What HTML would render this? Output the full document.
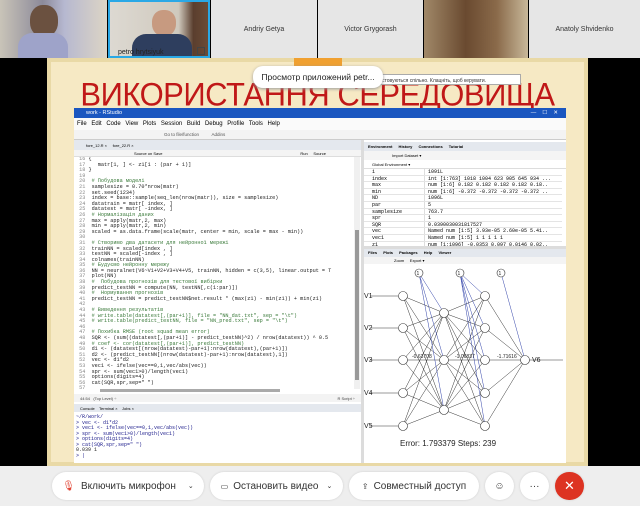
<!DOCTYPE html>
<html><head><meta charset="utf-8"><style>
*{margin:0;padding:0;box-sizing:border-box}
body{width:640px;height:506px;overflow:hidden;background:#000;font-family:"Liberation Sans",sans-serif;position:relative}
.a{position:absolute}
.th{position:absolute;top:0;height:58px;background:#e6e6e6;font-size:7px;color:#333;display:flex;align-items:center;justify-content:center}
.code{font-family:"Liberation Mono",monospace;font-size:5.2px;line-height:5.6px;white-space:pre;color:#222}
.cm{color:#3a7a3a}
.btn{position:absolute;top:472px;height:28px;background:#fff;border-radius:14px;font-size:10px;color:#333;display:flex;align-items:center;justify-content:center;box-shadow:0 0 2px #ccc}
.row{display:flex;height:6.6px;border-bottom:1px solid #e4e4e4;font-family:"Liberation Mono",monospace;font-size:5px;line-height:6px}
.row span:first-child{width:61px;padding-left:8px;border-right:1px solid #ddd}
.row span:last-child{padding-left:3px;white-space:nowrap;overflow:hidden}
</style></head><body>
<!-- thumbnails -->
<div class="th" style="left:0;width:107px;background:linear-gradient(90deg,#c9c4b8,#8c8a9a 40%,#b6b8d0 60%,#ddd5c5)"></div>
<div class="a" style="left:30px;top:5px;width:28px;height:32px;border-radius:45%;background:#6b5140"></div>
<div class="a" style="left:18px;top:33px;width:50px;height:25px;border-radius:14px 14px 0 0;background:#9ea3c9"></div>
<div class="th" style="left:108px;width:102px;border:2px solid #2aa8e6;background:linear-gradient(90deg,#ddd9d2,#cfc9bd 70%,#5a3e2e 85%,#6b4b36)"></div>
<div class="a" style="left:152px;top:10px;width:24px;height:26px;border-radius:45%;background:#c79a80"></div>
<div class="a" style="left:132px;top:34px;width:60px;height:22px;border-radius:14px 14px 0 0;background:#2e3e5e"></div>
<div class="a" style="left:118px;top:49px;font-size:7px;color:#222">petro hrytsiyuk</div>
<div class="a" style="left:197px;top:47px;width:8px;height:8px;border:1px solid #444"></div>
<div class="th" style="left:211px;width:106px">Andriy Getya</div>
<div class="th" style="left:318px;width:105px">Victor Grygorash</div>
<div class="th" style="left:424px;width:104px;background:linear-gradient(90deg,#a08868,#6a4a30 40%,#8a6a4a 70%,#c8b89a)"></div>
<div class="th" style="left:529px;width:111px">Anatoly Shvidenko</div>
<!-- slide -->
<div class="a" style="left:47px;top:58px;width:541px;height:408px;background:#f6e9c4;border:4px solid #e9d9a6"></div>
<div class="a" style="left:47px;top:78px;width:541px;text-align:center;font-size:31px;color:#c01818;letter-spacing:-0.5px;transform:scaleY(1.05)">ВИКОРИСТАННЯ СЕРЕДОВИЩА RSTUDIO</div>
<div class="a" style="left:294px;top:58px;width:48px;height:11px;background:#f0a030"></div>
<div class="a" style="left:285px;top:74px;width:236px;height:11px;background:#fff;font-size:5px;color:#333;padding:3px 0 0 80px;border:1px solid #aaa">використовуються спільно. Клацніть, щоб керувати.</div>
<div class="a" style="left:253px;top:66px;width:130px;height:22px;background:#fff;border-radius:10px;font-size:8.5px;color:#222;display:flex;align-items:center;justify-content:center;box-shadow:0 1px 3px #999">Просмотр приложений petr...</div>
<!-- rstudio -->
<div class="a" style="left:74px;top:108px;width:492px;height:355px;background:#fff"></div>
<div class="a" style="left:74px;top:108px;width:492px;height:10px;background:#1a56c0;color:#fff;font-size:5.5px;padding:2px 0 0 12px">work - RStudio<span style="position:absolute;right:8px">—&nbsp;&nbsp;&nbsp;&nbsp;☐&nbsp;&nbsp;&nbsp;&nbsp;✕</span></div>
<div class="a" style="left:74px;top:118px;width:492px;height:12px;background:#fafafa;font-size:6px;padding:3px 0 0 3px;word-spacing:3px">File Edit Code View Plots Session Build Debug Profile Tools Help</div>
<div class="a" style="left:74px;top:130px;width:492px;height:10px;background:#f3f3f3;border-bottom:1px solid #ccc;font-size:4.5px;color:#555;padding:2px 0 0 90px">Go to file/function &nbsp;&nbsp;&nbsp;&nbsp;&nbsp;&nbsp;&nbsp;&nbsp;&nbsp;Addins</div>
<div class="a" style="left:74px;top:140px;width:287px;height:10px;background:#e4e8ee;font-size:4px;padding:3px 0 0 12px">fore_12.R × &nbsp;&nbsp;&nbsp; fore_22.R ×</div>
<div class="a" style="left:74px;top:150px;width:287px;height:7px;background:#f4f4f4;border-bottom:1px solid #ddd;font-size:4px;padding:1px 0 0 60px">Source on Save<span style="position:absolute;right:35px">Run &nbsp;&nbsp;&nbsp; Source</span></div>
<div class="a code" style="left:76px;top:157px;width:275px;height:232px;overflow:hidden;color:#222"><span style="color:#888"> 16</span> {
<span style="color:#888"> 17</span>    matr[1, ] &lt;- z1[1 : (par + 1)]
<span style="color:#888"> 18</span> }
<span style="color:#888"> 19</span>
<span style="color:#888"> 20</span>  <span class="cm"># Побудова моделі</span>
<span style="color:#888"> 21</span>  samplesize = 0.70*nrow(matr)
<span style="color:#888"> 22</span>  set.seed(1234)
<span style="color:#888"> 23</span>  index = base::sample(seq_len(nrow(matr)), size = samplesize)
<span style="color:#888"> 24</span>  datatrain = matr[ index, ]
<span style="color:#888"> 25</span>  datatest = matr[ -index, ]
<span style="color:#888"> 26</span>  <span class="cm"># Нормалізація даних</span>
<span style="color:#888"> 27</span>  max = apply(matr,2, max)
<span style="color:#888"> 28</span>  min = apply(matr,2, min)
<span style="color:#888"> 29</span>  scaled = as.data.frame(scale(matr, center = min, scale = max - min))
<span style="color:#888"> 30</span>
<span style="color:#888"> 31</span>  <span class="cm"># Створимо два датасети для нейронної мережі</span>
<span style="color:#888"> 32</span>  trainNN = scaled[index , ]
<span style="color:#888"> 33</span>  testNN = scaled[-index , ]
<span style="color:#888"> 34</span>  colnames(trainNN)
<span style="color:#888"> 35</span>  <span class="cm"># Будуємо нейронну мережу</span>
<span style="color:#888"> 36</span>  NN = neuralnet(V6~V1+V2+V3+V4+V5, trainNN, hidden = c(3,5), linear.output = T
<span style="color:#888"> 37</span>  plot(NN)
<span style="color:#888"> 38</span>  <span class="cm">#  Побудова прогнозів для тестової вибірки</span>
<span style="color:#888"> 39</span>  predict_testNN = compute(NN, testNN[,c(1:par)])
<span style="color:#888"> 40</span>  <span class="cm">#  Нормування прогнозів</span>
<span style="color:#888"> 41</span>  predict_testNN = predict_testNN$net.result * (max(z1) - min(z1)) + min(z1)
<span style="color:#888"> 42</span>
<span style="color:#888"> 43</span>  <span class="cm"># Виведення результатів</span>
<span style="color:#888"> 44</span>  <span class="cm"># write.table(datatest[,(par+1)], file = "NN_dat.txt", sep = "\t")</span>
<span style="color:#888"> 45</span>  <span class="cm"># write.table(predict_testNN, file = "NN_pred.txt", sep = "\t")</span>
<span style="color:#888"> 46</span>
<span style="color:#888"> 47</span>  <span class="cm"># Похибка RMSE (root squad mean error)</span>
<span style="color:#888"> 48</span>  SQR &lt;- (sum((datatest[,(par+1)] - predict_testNN)^2) / nrow(datatest)) ^ 0.5
<span style="color:#888"> 49</span>  <span class="cm"># coef &lt;- cor(datatest[,(par+1)], predict_testNN)</span>
<span style="color:#888"> 50</span>  d1 &lt;- (datatest[(nrow(datatest)-par+1):nrow(datatest),(par+1)])
<span style="color:#888"> 51</span>  d2 &lt;- (predict_testNN[(nrow(datatest)-par+1):nrow(datatest),1])
<span style="color:#888"> 52</span>  vec &lt;- d1*d2
<span style="color:#888"> 53</span>  vec1 &lt;- ifelse(vec==0,1,vec/abs(vec))
<span style="color:#888"> 54</span>  spr &lt;- sum(vec1&gt;0)/length(vec1)
<span style="color:#888"> 55</span>  options(digits=4)
<span style="color:#888"> 56</span>  cat(SQR,spr,sep=" ")
<span style="color:#888"> 57</span></div>
<div class="a" style="left:354px;top:157px;width:6px;height:232px;background:#f0f0f0"></div>
<div class="a" style="left:355px;top:230px;width:4px;height:150px;background:#999"></div>
<div class="a" style="left:100px;top:389px;width:180px;height:3px;background:#aaa"></div>
<div class="a" style="left:74px;top:394px;width:287px;height:8px;background:#f3f3f3;font-size:4px;padding:2px 0 0 6px;color:#444">44:54 &nbsp;&nbsp;(Top Level) ÷<span style="position:absolute;right:6px">R Script ÷</span></div>
<div class="a" style="left:74px;top:404px;width:287px;height:8px;background:#e4e8ee;font-size:4px;padding:2px 0 0 6px">Console &nbsp;&nbsp; Terminal × &nbsp;&nbsp; Jobs ×</div>
<div class="a code" style="left:76px;top:415px;font-size:5px;line-height:5.5px;color:#1a1a8a">~/R/work/
&gt; vec &lt;- d1*d2
&gt; vec1 &lt;- ifelse(vec==0,1,vec/abs(vec))
&gt; spr &lt;- sum(vec1&gt;0)/length(vec1)
&gt; options(digits=4)
&gt; cat(SQR,spr,sep=" ")
<span style="color:#222">0.039 1</span>
&gt; |</div>
<div class="a" style="left:361px;top:140px;width:3px;height:323px;background:#dcdcdc"></div>
<!-- env pane -->
<div class="a" style="left:364px;top:142px;width:202px;height:9px;background:#e4e8ee;font-size:4px;font-weight:bold;padding:2px 0 0 4px;word-spacing:5px">Environment History Connections Tutorial</div>
<div class="a" style="left:364px;top:151px;width:202px;height:9px;background:#f4f4f4;font-size:4px;padding:2px 0 0 28px">Import Dataset ▾</div>
<div class="a" style="left:364px;top:160px;width:202px;height:9px;background:#fff;border-bottom:1px solid #ddd;font-size:4px;padding:2px 0 0 8px">Global Environment ▾</div>
<div class="a" style="left:364px;top:169px;width:198px">
<div class="row"><span>i</span><span>1091L</span></div>
<div class="row"><span>index</span><span>int [1:763] 1018 1004 623 905 645 934 ...</span></div>
<div class="row"><span>max</span><span>num [1:6] 0.182 0.182 0.182 0.182 0.18..</span></div>
<div class="row"><span>min</span><span>num [1:6] -0.372 -0.372 -0.372 -0.372 ..</span></div>
<div class="row"><span>ND</span><span>1096L</span></div>
<div class="row"><span>par</span><span>5</span></div>
<div class="row"><span>samplesize</span><span>763.7</span></div>
<div class="row"><span>spr</span><span>1</span></div>
<div class="row"><span>SQR</span><span>0.0390030031817527</span></div>
<div class="row"><span>vec</span><span>Named num [1:5] 3.93e-05 2.60e-05 5.41..</span></div>
<div class="row"><span>vec1</span><span>Named num [1:5] 1 1 1 1 1</span></div>
<div class="row"><span>z1</span><span>num [1:1096] -0.0353 0.097 0.0146 0.02..</span></div>
</div>
<div class="a" style="left:364px;top:246px;width:202px;height:3px;background:#dcdcdc"></div>
<div class="a" style="left:364px;top:249px;width:202px;height:8px;background:#e4e8ee;font-size:4px;font-weight:bold;padding:1px 0 0 4px;word-spacing:5px">Files Plots Packages Help Viewer</div>
<div class="a" style="left:364px;top:257px;width:202px;height:7px;background:#f4f4f4;font-size:4px;padding:1px 0 0 30px">Zoom &nbsp;&nbsp;&nbsp; Export ▾</div>
<svg class="a" style="left:364px;top:264px" width="202" height="198" viewBox="364 264 202 198" font-family="Liberation Sans" >
<g stroke="#333" stroke-width="0.5" fill="none">
<path d="M403 296L444 313M403 296L444 360M403 296L444 410M403 328L444 313M403 328L444 360M403 328L444 410M403 360L444 313M403 360L444 360M403 360L444 410M403 393L444 313M403 393L444 360M403 393L444 410M403 426L444 313M403 426L444 360M403 426L444 410"/>
<path d="M444 313L485 296M444 313L485 328M444 313L485 360M444 313L485 393M444 313L485 426M444 360L485 296M444 360L485 328M444 360L485 360M444 360L485 393M444 360L485 426M444 410L485 296M444 410L485 328M444 410L485 360M444 410L485 393M444 410L485 426"/>
<path d="M485 296L525 360M485 328L525 360M485 360L525 360M485 393L525 360M485 426L525 360M525 360L563 360"/>
<path d="M370 296L398 296M370 328L398 328M370 360L398 360M370 393L398 393M370 426L398 426"/>
</g>
<g stroke="#3344aa" stroke-width="0.5" fill="none"><path d="M419 273L444 313M419 273L444 360M419 273L444 410M460 273L485 296M460 273L485 328M460 273L485 360M460 273L485 393M460 273L485 426M501 273L525 360"/></g>
<g fill="#fff" stroke="#333" stroke-width="0.6">
<circle cx="403" cy="296" r="4.5"/><circle cx="403" cy="328" r="4.5"/><circle cx="403" cy="360" r="4.5"/><circle cx="403" cy="393" r="4.5"/><circle cx="403" cy="426" r="4.5"/>
<circle cx="444" cy="313" r="4.5"/><circle cx="444" cy="360" r="4.5"/><circle cx="444" cy="410" r="4.5"/>
<circle cx="485" cy="296" r="4.5"/><circle cx="485" cy="328" r="4.5"/><circle cx="485" cy="360" r="4.5"/><circle cx="485" cy="393" r="4.5"/><circle cx="485" cy="426" r="4.5"/>
<circle cx="525" cy="360" r="4.5"/>
<circle cx="419" cy="273" r="4"/><circle cx="460" cy="273" r="4"/><circle cx="501" cy="273" r="4"/></g>
<g font-size="5" fill="#222"><text x="416.5" y="275">1</text><text x="457.5" y="275">1</text><text x="498.5" y="275">1</text>
<text x="364" y="298" font-size="7">V1</text><text x="364" y="330" font-size="7">V2</text><text x="364" y="362" font-size="7">V3</text><text x="364" y="395" font-size="7">V4</text><text x="364" y="428" font-size="7">V5</text><text x="532" y="362" font-size="7">V6</text>
<text x="497" y="358">-1.71616</text><text x="455" y="358">-1.06837</text><text x="412" y="358">-0.63708</text>
<text x="400" y="446" font-size="8">Error: 1.793379   Steps: 239</text></g>
</svg>
<!-- bottom bar -->
<div class="a" style="left:0;top:466px;width:640px;height:40px;background:#eeeeee"></div>
<div class="btn" style="left:52px;width:152px"><span style="color:#e04030;margin-right:6px">🎙</span>Включить микрофон <span style="margin-left:12px;font-size:7px">⌄</span></div>
<div class="btn" style="left:210px;width:133px"><span style="margin-right:5px;font-size:8px">▭</span>Остановить видео <span style="margin-left:8px;font-size:7px">⌄</span></div>
<div class="btn" style="left:349px;width:130px"><span style="margin-right:5px;font-size:8px">⇪</span>Совместный доступ</div>
<div class="btn" style="left:485px;width:29px">☺</div>
<div class="btn" style="left:520px;width:29px">···</div>
<div class="btn" style="left:555px;width:29px;background:#dd3322;color:#fff;font-size:13px">✕</div>
</body></html>
